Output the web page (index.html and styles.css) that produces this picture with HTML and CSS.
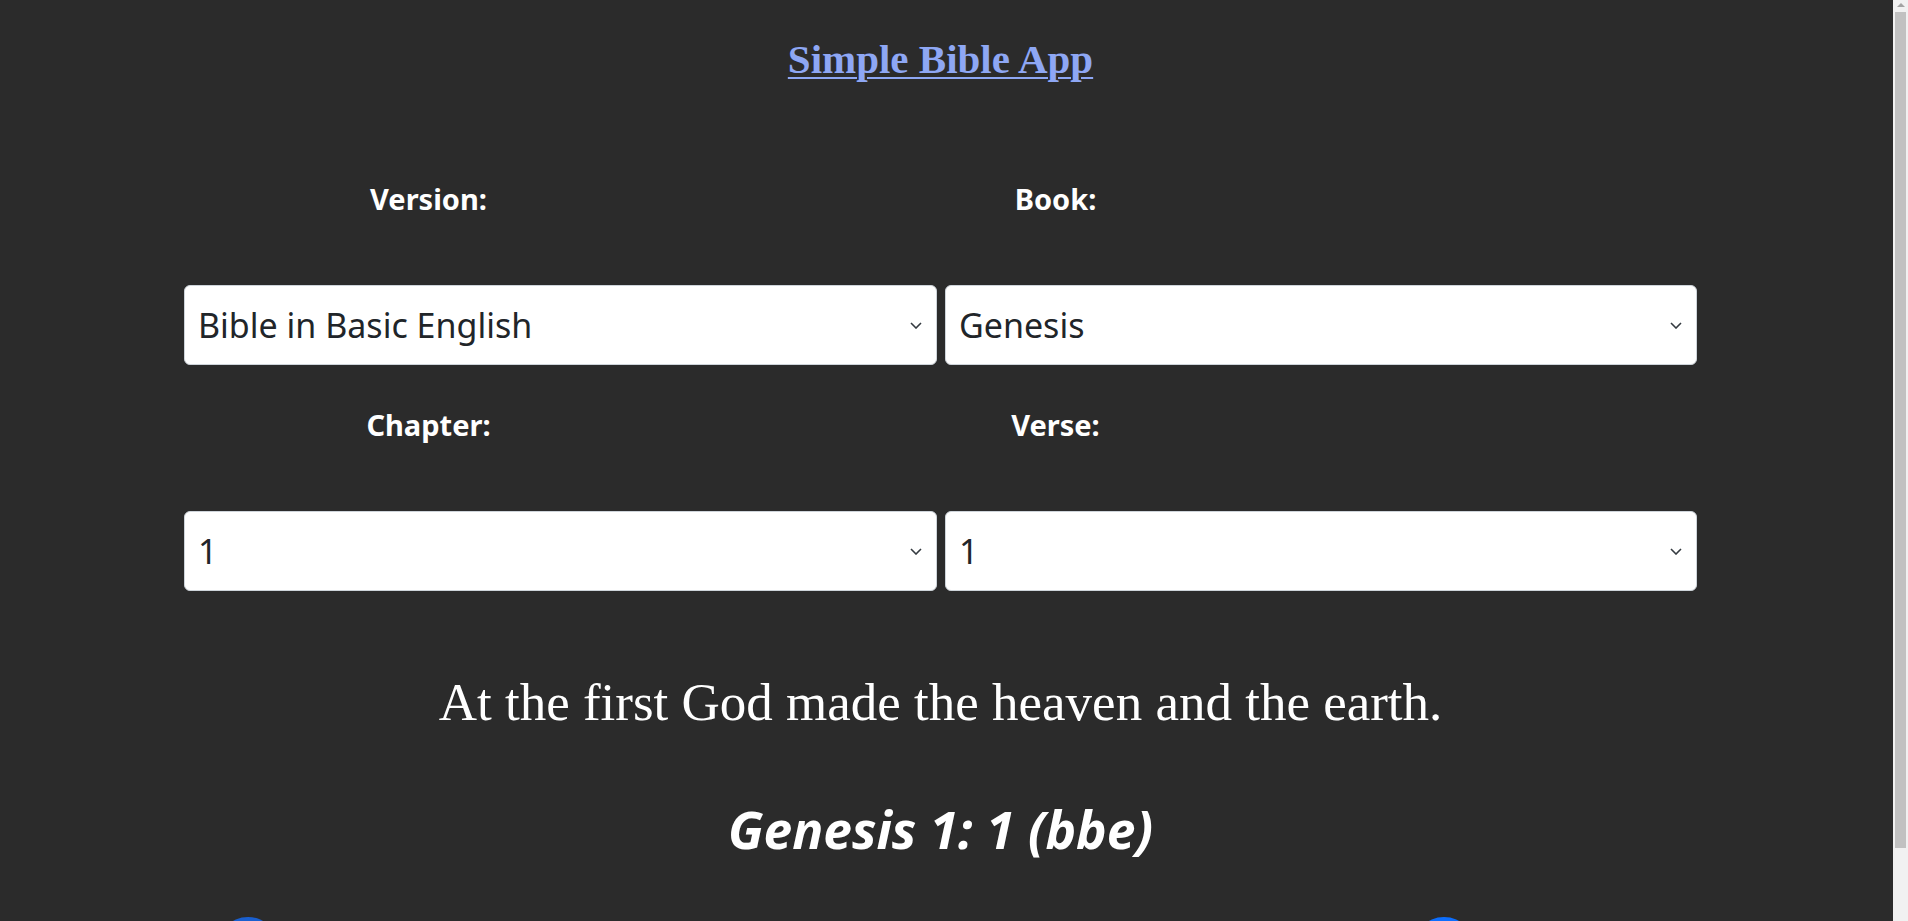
FILE: index.html
```html
<!DOCTYPE html>
<html lang="en">
<head>
<meta charset="utf-8">
<title>Simple Bible App</title>
<link rel="stylesheet" href="styles.css">
</head>
<body>
<h1 class="title"><a href="#" class="title-link">Simple Bible App</a></h1>
<main class="picker">
  <div class="label-row">
    <label class="field-label" for="version">Version:</label>
    <label class="field-label" for="book">Book:</label>
  </div>
  <div class="select-row">
    <div class="select-wrap">
      <select id="version" class="picker-select"><option>Bible in Basic English</option></select>
      <svg class="chevron" viewBox="0 0 12 7" width="12" height="7"><path d="M1 1 L6 6 L11 1" fill="none" stroke="#343a40" stroke-width="1.6"/></svg>
    </div>
    <div class="select-wrap">
      <select id="book" class="picker-select"><option>Genesis</option></select>
      <svg class="chevron" viewBox="0 0 12 7" width="12" height="7"><path d="M1 1 L6 6 L11 1" fill="none" stroke="#343a40" stroke-width="1.6"/></svg>
    </div>
  </div>
  <div class="label-row">
    <label class="field-label" for="chapter">Chapter:</label>
    <label class="field-label" for="verse">Verse:</label>
  </div>
  <div class="select-row">
    <div class="select-wrap">
      <select id="chapter" class="picker-select"><option>1</option></select>
      <svg class="chevron" viewBox="0 0 12 7" width="12" height="7"><path d="M1 1 L6 6 L11 1" fill="none" stroke="#343a40" stroke-width="1.6"/></svg>
    </div>
    <div class="select-wrap">
      <select id="verse" class="picker-select"><option>1</option></select>
      <svg class="chevron" viewBox="0 0 12 7" width="12" height="7"><path d="M1 1 L6 6 L11 1" fill="none" stroke="#343a40" stroke-width="1.6"/></svg>
    </div>
  </div>
</main>
<p class="verse-text">At the first God made the heaven and the earth.</p>
<h2 class="reference">Genesis 1: 1 (bbe)</h2>
<div class="nav-row">
  <button class="nav-btn nav-prev" aria-label="Previous verse"></button>
  <button class="nav-btn nav-next" aria-label="Next verse"></button>
</div>
<div class="scrollbar" aria-hidden="true">
  <svg class="scroll-arrow" viewBox="0 0 8 4" width="8" height="4"><path d="M4 0 L8 4 L0 4 Z" fill="#a3a3a3"/></svg>
  <div class="scroll-thumb"></div>
</div>
</body>
</html>
```
FILE: styles.css
```css
html, body {
  margin: 0;
  padding: 0;
}
body {
  background: #2b2b2b;
  color: #ffffff;
  font-family: "Noto Sans", "Open Sans", sans-serif;
  padding-right: 27px;
}
.title {
  margin: 35px 0 0;
  text-align: center;
  font-family: "Liberation Serif", serif;
  font-weight: 700;
  font-size: 41px;
  line-height: 48px;
}
.title-link {
  color: #8ea7f4;
  text-decoration: underline;
  text-decoration-thickness: 2px;
  text-underline-offset: 4px;
}
.picker {
  margin-top: 98px;
}
.label-row {
  display: grid;
  grid-template-columns: 627px 627px;
  margin-left: 115px;
}
.label-row + .select-row {
  margin-top: 68px;
}
.select-row + .label-row {
  margin-top: 42px;
}
.field-label {
  text-align: center;
  font-weight: 700;
  font-size: 29px;
  line-height: 36px;
  color: #ffffff;
}
.select-row {
  display: grid;
  grid-template-columns: 753px 752px;
  column-gap: 8px;
  margin-left: 184px;
}
.select-wrap {
  position: relative;
}
.picker-select {
  display: block;
  width: 100%;
  height: 80px;
  margin: 0;
  padding: 0 40px 0 13px;
  box-sizing: border-box;
  appearance: none;
  -webkit-appearance: none;
  background: #ffffff;
  border: 1px solid #ced4da;
  border-radius: 6px;
  color: #212529;
  font-family: "Noto Sans", "Open Sans", sans-serif;
  font-size: 34px;
}
.chevron {
  position: absolute;
  right: 15px;
  top: 37px;
}
.verse-text {
  margin: 79px 0 0;
  text-align: center;
  font-family: "Liberation Serif", serif;
  font-size: 53px;
  line-height: 64px;
}
.reference {
  margin: 64px 0 0;
  text-align: center;
  font-family: "Noto Sans", "Open Sans", sans-serif;
  font-style: italic;
  font-weight: 700;
  font-size: 51.5px;
  line-height: 62px;
}
.nav-row {
  display: flex;
  gap: 1132px;
  padding: 57px 0 7px 216px;
}
.nav-btn {
  width: 64px;
  height: 64px;
  border: none;
  border-radius: 50%;
  padding: 0;
}
.nav-prev {
  background: #1a5fcf;
}
.nav-next {
  background: #0d6efd;
}
.scrollbar {
  position: fixed;
  top: 0;
  right: 0;
  width: 15px;
  height: 100vh;
  background: #f1f1f1;
}
.scroll-arrow {
  position: absolute;
  top: 3px;
  left: 4px;
}
.scroll-thumb {
  position: absolute;
  top: 12px;
  left: 2px;
  width: 11px;
  height: 836px;
  background: #c1c1c1;
}
```
